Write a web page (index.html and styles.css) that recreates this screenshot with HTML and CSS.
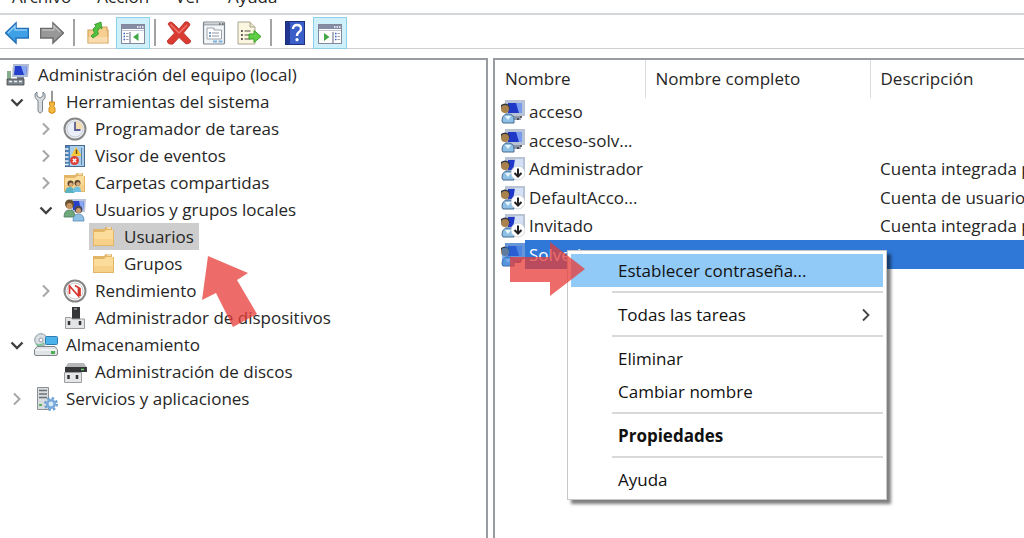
FILE: index.html
```html
<!DOCTYPE html>
<html lang="es">
<head>
  <meta charset="UTF-8">
  <meta name="viewport" content="width=device-width, initial-scale=1.0">
  <title>Administración de equipos</title>
  <link rel="stylesheet" href="styles.css">
</head>
<body>
  <!-- Shared icons -->
  <svg class="sprite" aria-hidden="true">
    <symbol id="chevron-right" viewBox="0 0 14 14">
      <path d="M4 1.5 L9.5 7 L4 12.5" fill="none" stroke="#a6a6a6" stroke-width="2"/>
    </symbol>
    <symbol id="chevron-down" viewBox="0 0 14 14">
      <path d="M1.5 4.5 L7 10 L12.5 4.5" fill="none" stroke="#404040" stroke-width="2.4"/>
    </symbol>
    <symbol id="folder" viewBox="0 0 24 24">
      <path d="M1 4 H12 L14 2 H20 V5 H22 V21 H1 Z" fill="#e3b566"/>
      <path d="M2 7 H12 L14 5 H21 V20 H2 Z" fill="#fbdc9b"/>
      <path d="M2 14 H21 V20 H2 Z" fill="#f7d08a"/>
      <path d="M15 3 H19" stroke="#fff" stroke-width="1"/>
    </symbol>
    <symbol id="user" viewBox="0 0 24 24">
      <path d="M4 0 H24 V16 H4 Z" fill="#b9c3d6"/>
      <path d="M7 3 H21 V13 H7 Z" fill="#1f38c8"/>
      <path d="M15 3 H21 V13 H18 Z" fill="#7a9cf0"/>
      <path d="M12 16 H19 L20 20 H12 Z" fill="#8c96a8"/>
      <path d="M16 19 h2 M19 17 h2" stroke="#333" stroke-width="1.5"/>
      <path d="M0 5 Q4 2 8 5 L9 9 L0 9 Z" fill="#2e3440"/>
      <circle cx="4" cy="9" r="4" fill="#a9814c"/>
      <path d="M1 21 Q1 14 7 14 Q13 14 13 20 V23 H2 Z" fill="#8fc1e6" stroke="#45698f" stroke-width="1"/>
      <path d="M4 16 L7 20 L10 16" fill="#e9f5ff"/>
    </symbol>
    <symbol id="user-off" viewBox="0 0 24 24">
      <use href="#user"/>
      <path d="M14 2 H22 V14 H12 Z" fill="#d3e0f5"/>
      <circle cx="17" cy="16" r="7" fill="#fff" stroke="#b9bfc9" stroke-width="0.6"/>
      <path d="M17 11.5 V19 M13.5 16 L17 19.5 L20.5 16" fill="none" stroke="#222" stroke-width="2"/>
    </symbol>
  </svg>

  <!-- Menu -->
  <nav class="menubar">
    <a href="#">Archivo</a>
    <a href="#">Acción</a>
    <a href="#">Ver</a>
    <a href="#">Ayuda</a>
  </nav>

  <!-- Toolbar -->
  <div class="toolbar">
    <button aria-label="Atrás">
      <svg viewBox="0 0 24 24"><path d="M0.500 12 L11 2 V7.500 H23.500 V17 H11 V22 Z" fill="#3fa0e6" stroke="#2470b8" stroke-width="1.500"/><path d="M3 12 L10 5 V9 H22" fill="none" stroke="#8ccbf5" stroke-width="1.500"/></svg>
    </button>
    <button aria-label="Adelante">
      <svg viewBox="0 0 24 24"><path d="M23.500 12 L13 2 V7.500 H0.500 V17 H13 V22 Z" fill="#989898" stroke="#6c6c6c" stroke-width="1.500"/><path d="M2 9 H14 V5 L20 11" fill="none" stroke="#bdbdbd" stroke-width="1.500"/></svg>
    </button>
    <span class="divider"></span>
    <button aria-label="Subir un nivel">
      <svg viewBox="0 0 24 24"><path d="M2 9 H12 L14 6 H21 V9 H22 V22 H2 Z" fill="#f6cf90" stroke="#d2a15a" stroke-width="1.200"/><path d="M2.500 16 H21.500 V21.500 H2.500 Z" fill="#f9dcae"/><path d="M5 15 L8.500 12 L7 8 L10 5 L8.500 3.500 L15 1 L16 8 L14 6.500 L11.500 10 L12.500 13 L7 17 Z" fill="#4fc23f" stroke="#31902a" stroke-width="0.800"/></svg>
    </button>
    <button class="active" aria-label="Mostrar u ocultar árbol">
      <svg viewBox="0 0 24 24"><rect x="0.500" y="3.500" width="23" height="19" fill="#fdfdfd" stroke="#83899b"/><path d="M1 4 H23 V8 H1 Z" fill="#858ca5"/><path d="M16 6 h1.500 M18.500 6 h1.500 M21 6 h1.500" stroke="#fff" stroke-width="1.500"/><path d="M1 9.500 H23" stroke="#c4c8d4"/><path d="M9 11 V22" stroke="#83899b" stroke-width="1.300"/><path d="M2.500 12.500 h1.500 M2.500 15.500 h1.500 M2.500 18.500 h1.500" stroke="#3d62bd" stroke-width="1.500"/><path d="M5 12.500 h2.500 M5 15.500 h2.500 M5 18.500 h2.500" stroke="#9aa0b4"/><path d="M17.500 12 V20 L12 16 Z" fill="#43a847"/></svg>
    </button>
    <span class="divider"></span>
    <button aria-label="Eliminar">
      <svg viewBox="0 0 24 24"><path d="M1 3 Q3 -1 7 3 L12 8 L18 1 Q22 0 23 4 L16.500 12 L24 20 Q23 23 19 23 L12 16.500 L6 23 Q1 24 0 20 L7.500 12 Z" fill="#d93a31" stroke="#b8322b" stroke-width="0.800"/><path d="M3.500 3.500 L12 12 L20 4" fill="none" stroke="#ee766d" stroke-width="1.500"/></svg>
    </button>
    <button aria-label="Propiedades">
      <svg viewBox="0 0 24 24"><rect x="1.500" y="1" width="21" height="22" rx="1" fill="#f3f5f7" stroke="#7e868f" stroke-width="1.200"/><path d="M2 3.500 H22" stroke="#a9afb7" stroke-width="2"/><path d="M17 3 h1.500 M20 3 h1.500" stroke="#555" stroke-width="1.500"/><path d="M5 7 H12 V9 H19.500 V18 H5 Z" fill="#fff" stroke="#9ba3ad"/><path d="M7 12 h2 M7 15 h2" stroke="#4e7fb5" stroke-width="1.500"/><path d="M10 12 h7 M10 15 h7" stroke="#8f98a3" stroke-width="1.200"/><path d="M11 20.500 h4 M16.500 20.500 h4" stroke="#78b1db" stroke-width="2"/></svg>
    </button>
    <button aria-label="Exportar lista">
      <svg viewBox="0 0 24 24"><path d="M1 1 H13 L18 6 V23 H1 Z" fill="#fbf6df" stroke="#aaa58f"/><path d="M13 1 V6 H18" fill="#e6e0c6" stroke="#aaa58f"/><path d="M4 10 h1.800 M4 14 h1.800 M4 18 h1.800" stroke="#555" stroke-width="1.800"/><path d="M7.500 10 h6 M7.500 14 h5 M7.500 18 h6" stroke="#8a8776" stroke-width="1.300"/><path d="M12 13 H17 V9.500 L24 15.500 L17 21.500 V18 H12 Z" fill="#5fd045" stroke="#38a229"/></svg>
    </button>
    <span class="divider"></span>
    <button aria-label="Ayuda">
      <svg viewBox="0 0 24 24"><rect x="2.500" y="0.500" width="19" height="23" fill="#3a5fc8" stroke="#1b2f7d"/><path d="M3 1 H7 V23 H3 Z" fill="#21378f"/><path d="M10 8 Q10 4 14 4 Q18 4 18 8 Q18 10 15.500 11.500 Q14 12.500 14 15" fill="none" stroke="#fff" stroke-width="2.400"/><circle cx="14" cy="18.700" r="1.600" fill="#fff"/></svg>
    </button>
    <button class="active" aria-label="Mostrar u ocultar panel de acciones">
      <svg viewBox="0 0 24 24"><rect x="0.500" y="3.500" width="23" height="19" fill="#fdfdfd" stroke="#83899b"/><path d="M1 4 H23 V8 H1 Z" fill="#858ca5"/><path d="M16 6 h1.500 M18.500 6 h1.500 M21 6 h1.500" stroke="#fff" stroke-width="1.500"/><path d="M1 9.500 H23" stroke="#c4c8d4"/><path d="M15 11 V22" stroke="#83899b" stroke-width="1.300"/><path d="M17 12.500 h1.500 M17 15.500 h1.500 M17 18.500 h1.500" stroke="#3d62bd" stroke-width="1.500"/><path d="M19.500 12.500 h2.500 M19.500 15.500 h2.500 M19.500 18.500 h2.500" stroke="#9aa0b4"/><path d="M6 12 V20 L11.500 16 Z" fill="#43a847"/></svg>
    </button>
  </div>

  <main class="panes">
    <!-- Console tree -->
    <section class="tree-pane">
      <ul class="tree">
        <li>
          <div class="row"><span class="item">
            <svg viewBox="0 0 24 24"><path d="M7 1 H23 L22 14 H6 Z" fill="#aebbd3"/><path d="M9 3 H21 L20 12 H8 Z" fill="#2440ca"/><path d="M15 3 H21 L20 12 H18 Z" fill="#88a6f1"/><path d="M11 14 H18 V17 H11 Z" fill="#7b8597"/><path d="M1 8 H5 V16 H1 Z" fill="#86ad8d"/><path d="M1 16 H18 V22 H1 Z" fill="#7d858f" stroke="#444" stroke-width="0.800"/><path d="M3 18.500 h3 M8 18.500 h3 M13 18.500 h3" stroke="#f0f0f0" stroke-width="1.500"/></svg>
            Administración del equipo (local)</span></div>
          <ul>
            <li>
              <div class="row"><svg class="chevron"><use href="#chevron-down"/></svg><span class="item">
                <svg viewBox="0 0 24 24"><path d="M3 2 L3 6 L6 8 L9 6 V2 Q12 4 11 8 L8.500 11 V21 Q6 25 4 21 V11 Q0 8 1 4 Z" fill="#d5dade" stroke="#7b848c"/><path d="M17.500 1 L18.500 1 V12 H17.500 Z" fill="#999" stroke="#999"/><path d="M15.500 12 H20.500 V15 L19.500 16 L21 18 V22 Q18 25 15 22 V18 L16.500 16 L15.500 15 Z" fill="#f5b93f" stroke="#cb8a1d"/></svg>
                Herramientas del sistema</span></div>
              <ul>
                <li><div class="row"><svg class="chevron"><use href="#chevron-right"/></svg><span class="item">
                  <svg viewBox="0 0 24 24"><circle cx="12" cy="12" r="10.500" fill="#edf1f7" stroke="#878787" stroke-width="2"/><circle cx="12" cy="12" r="8" fill="#e9eef8" stroke="#c9ccd2"/><path d="M12 12 V4 A8 8 0 0 1 20 12 Z" fill="#f4dcae"/><path d="M12 5 V13 H17.500" fill="none" stroke="#5a5d93" stroke-width="1.800"/></svg>
                  Programador de tareas</span></div></li>
                <li><div class="row"><svg class="chevron"><use href="#chevron-right"/></svg><span class="item">
                  <svg viewBox="0 0 24 24"><rect x="2.500" y="1.500" width="19" height="21" fill="#a9cdea" stroke="#4a6a8f"/><path d="M3 2 H7 V22 H3 Z" fill="#4f84bb"/><path d="M1.500 5 h4 M1.500 9 h4 M1.500 13 h4 M1.500 17 h4 M1.500 20.500 h4" stroke="#eef3f8" stroke-width="1.300"/><path d="M13 3 L19 12 H8 Z" fill="#f4c93d"/><path d="M18.500 4 V21" stroke="#5b84ac"/><path d="M13.500 5.500 V10" stroke="#714c0a" stroke-width="1.500"/><circle cx="11.500" cy="16.500" r="4.500" fill="#dc3e38"/><path d="M9.800 14.800 L13.200 18.200 M13.200 14.800 L9.800 18.200" stroke="#fff" stroke-width="1.300"/></svg>
                  Visor de eventos</span></div></li>
                <li><div class="row"><svg class="chevron"><use href="#chevron-right"/></svg><span class="item">
                  <svg viewBox="0 0 24 24"><use href="#folder"/><circle cx="7.500" cy="12.500" r="3" fill="#5a4630"/><circle cx="14.500" cy="12" r="3" fill="#5a4630"/><circle cx="8" cy="13.500" r="2" fill="#d9aa77"/><circle cx="15" cy="13" r="2" fill="#d9aa77"/><path d="M2 22 Q2 16 7 16 Q11 16 11.500 22 Z" fill="#59b3c4"/><path d="M10 21 Q10 15.500 14.500 15.500 Q18 15.500 18 21 Z" fill="#6fbfe0"/></svg>
                  Carpetas compartidas</span></div></li>
                <li>
                  <div class="row"><svg class="chevron"><use href="#chevron-down"/></svg><span class="item">
                    <svg viewBox="0 0 24 24"><path d="M8 1 H23 L22 14 H8 Z" fill="#b9c4da"/><path d="M10 3 H21 L20 12 H10 Z" fill="#2440ca"/><path d="M16 3 H21 L20 12 H18 Z" fill="#88a6f1"/><circle cx="6.500" cy="6" r="4.500" fill="#675134"/><circle cx="6.500" cy="8" r="3" fill="#c7935c"/><path d="M1 19 Q1 12 6.500 12 Q12 12 12 19 Z" fill="#6ea87b" stroke="#47765a" stroke-width="0.800"/><circle cx="15.500" cy="11.500" r="3.800" fill="#4a4455"/><circle cx="15.500" cy="12.500" r="2.500" fill="#cf9d6e"/><path d="M10 23 Q10 16 15.500 16 Q21 16 21 23 Z" fill="#8fc1e6" stroke="#5588b4" stroke-width="0.800"/></svg>
                    Usuarios y grupos locales</span></div>
                  <ul>
                    <li><div class="row"><span class="chevron"></span><span class="item selected"><svg><use href="#folder"/></svg>Usuarios</span></div></li>
                    <li><div class="row"><span class="chevron"></span><span class="item"><svg><use href="#folder"/></svg>Grupos</span></div></li>
                  </ul>
                </li>
                <li><div class="row"><svg class="chevron"><use href="#chevron-right"/></svg><span class="item">
                  <svg viewBox="0 0 24 24"><circle cx="12" cy="12" r="10.500" fill="#fff" stroke="#858585" stroke-width="2"/><circle cx="12" cy="12" r="8" fill="none" stroke="#c9c9c9"/><path d="M6.500 15 V7 L15.500 17 V8 M12 6.500 L17 9.500 V17" fill="none" stroke="#d93630" stroke-width="1.700"/></svg>
                  Rendimiento</span></div></li>
                <li><div class="row"><span class="chevron"></span><span class="item">
                  <svg viewBox="0 0 24 24"><path d="M9 1 H17 V13 H9 Z" fill="#353638"/><path d="M11 3 h3" stroke="#999" stroke-width="1.500"/><path d="M2.500 11.500 H8 L9 13 H21.500 V22.500 H2.500 Z" fill="#e3e4e6" stroke="#9a9c9f"/><path d="M6 15 V19 M17 15 V19" stroke="#333" stroke-width="2.500"/></svg>
                  Administrador de dispositivos</span></div></li>
              </ul>
            </li>
            <li>
              <div class="row"><svg class="chevron"><use href="#chevron-down"/></svg><span class="item">
                <svg viewBox="0 0 24 24"><circle cx="7" cy="7" r="6.300" fill="#d7dfe2" stroke="#8f9aa0"/><circle cx="7" cy="7" r="2" fill="#fff" stroke="#99a"/><path d="M2 11 Q6 14 10 10" stroke="#7fc39a" stroke-width="2" fill="none"/><rect x="11.500" y="3.500" width="12" height="8" rx="1" fill="#4cb2ea" stroke="#2c7cb2"/><path d="M3 13.500 H21 L23.500 17 V21 Q23.500 22.500 22 22.500 H2 Q0.500 22.500 0.500 21 V17 Z" fill="#dfe3e6" stroke="#7e868c"/><path d="M1 17 H23" stroke="#fff"/><rect x="17" y="18" width="4" height="3" fill="#4caf50"/></svg>
                Almacenamiento</span></div>
              <ul>
                <li><div class="row"><span class="chevron"></span><span class="item">
                  <svg viewBox="0 0 24 24"><path d="M5 3 H21 L24 8 H2 Z" fill="#b5b7b9"/><path d="M2 7 H24 V12 H2 Z" fill="#343638"/><path d="M18 9.500 h3" stroke="#68d06a" stroke-width="1.500"/><path d="M1.500 12.500 H18.500 V22.500 H1.500 Z" fill="#e5e6e8" stroke="#9a9c9f"/><path d="M5.500 15 V19 M14 15 V19" stroke="#333" stroke-width="2.500"/></svg>
                  Administración de discos</span></div></li>
              </ul>
            </li>
            <li><div class="row"><svg class="chevron"><use href="#chevron-right"/></svg><span class="item">
              <svg viewBox="0 0 24 24"><path d="M3.500 0.500 H14.500 V22.500 H3.500 Z" fill="#d9dde0" stroke="#8a9197"/><path d="M5 3.500 H13 M5 7 H13 M5 10.500 H13" stroke="#6a7177" stroke-width="1.500"/><path d="M5 18 h3" stroke="#58b158" stroke-width="2"/><circle cx="17" cy="17" r="5.800" fill="none" stroke="#6c9fd2" stroke-width="2.400" stroke-dasharray="2.400 2.150"/><circle cx="17" cy="17" r="3.700" fill="#d9eafa" stroke="#78a9da" stroke-width="2.600"/></svg>
              Servicios y aplicaciones</span></div></li>
          </ul>
        </li>
      </ul>
      <!-- Pointer to the Usuarios folder -->
      <svg class="arrow arrow-tree" viewBox="0 0 56 72"><path d="M6 0 L46 17 L35 24 L55 58 L31 71 L14 37 L0 44 Z"/></svg>
    </section>

    <!-- User list -->
    <section class="list-pane">
      <table class="users">
        <thead>
          <tr><th class="col-name">Nombre</th><th class="col-full">Nombre completo</th><th>Descripción</th></tr>
        </thead>
        <tbody>
          <tr><td><div class="user"><svg><use href="#user"/></svg><span>acceso</span></div></td><td></td><td></td></tr>
          <tr><td><div class="user"><svg><use href="#user"/></svg><span>acceso-solv...</span></div></td><td></td><td></td></tr>
          <tr><td><div class="user"><svg><use href="#user-off"/></svg><span>Administrador</span></div></td><td></td><td>Cuenta integrada p</td></tr>
          <tr><td><div class="user"><svg><use href="#user-off"/></svg><span>DefaultAcco...</span></div></td><td></td><td>Cuenta de usuario</td></tr>
          <tr><td><div class="user"><svg><use href="#user-off"/></svg><span>Invitado</span></div></td><td></td><td>Cuenta integrada p</td></tr>
          <tr class="selected"><td><div class="user"><svg viewBox="0 0 24 24"><use href="#user"/><path d="M4 0 H24 V16 H20 V20 H13 V23 H1 V5 H4 Z" fill="#2f78d7" opacity="0.6"/></svg><span>Solvetic</span></div></td><td></td><td></td></tr>
        </tbody>
      </table>

      <!-- Context menu -->
      <div class="context-menu">
        <button class="hover">Establecer contraseña...</button>
        <hr>
        <button>Todas las tareas <svg viewBox="0 0 14 14"><path d="M4 1.500 L9.500 7 L4 12.500" fill="none" stroke="#444" stroke-width="1.800"/></svg></button>
        <hr>
        <button>Eliminar</button>
        <button>Cambiar nombre</button>
        <hr>
        <button class="default">Propiedades</button>
        <hr>
        <button>Ayuda</button>
      </div>
      <!-- Pointer to the password option -->
      <svg class="arrow arrow-menu" viewBox="0 0 76 54"><path d="M0 15 H40 V0 L75 27 L40 54 V40 H0 Z"/></svg>
    </section>
  </main>
</body>
</html>
```

FILE: styles.css
```css
* {
  box-sizing: border-box;
}
body {
  margin: 0;
  height: 100vh;
  display: flex;
  flex-direction: column;
  overflow: hidden;
  background: #fff;
  color: #262626;
  font-family: "Open Sans", "Noto Sans", sans-serif;
  font-size: 17px;
  line-height: 24px;
}
button {
  font: inherit;
  color: inherit;
  border: 0;
  background: none;
}
ul {
  list-style: none;
  margin: 0;
  padding: 0;
}
.sprite {
  position: absolute;
  width: 0;
  height: 0;
}

/* Menu and toolbar */
.menubar {
  display: flex;
  align-items: flex-end;
  gap: 26px;
  height: 13px;
  padding: 0 12px 4px;
  overflow: hidden;
}
.menubar a {
  color: inherit;
  text-decoration: none;
}
.toolbar {
  display: flex;
  align-items: center;
  gap: 1px;
  height: 36px;
  padding-top: 2px;
  border-top: 2px solid #d4d7da;
  border-bottom: 1px solid #cfcfcf;
}
.toolbar button {
  display: flex;
  align-items: center;
  justify-content: center;
  width: 34px;
  height: 32px;
  padding: 0;
}
.toolbar button.active {
  background: #cdf0fa;
  border: 1px solid #8fd0e8;
}
.toolbar svg {
  width: 24px;
  height: 24px;
}
.divider {
  width: 2px;
  height: 27px;
  margin: 0 5px 0 3px;
  background: #a3a3a3;
}

/* Panes */
.panes {
  flex: 1;
  display: flex;
  gap: 5px;
  margin-top: 9px;
  min-height: 0;
}
.tree-pane,
.list-pane {
  position: relative;
  border: 2px solid #989b9f;
  border-bottom: 0;
}
.tree-pane {
  flex: 0 0 488px;
  border-left: 0;
  padding: 1px 3px;
}
.list-pane {
  flex: 1;
  min-width: 0;
  border-right: 0;
  overflow: hidden;
}

/* Tree */
.tree ul ul {
  padding-left: 29px;
}
.row {
  display: flex;
  align-items: center;
  height: 27px;
}
.chevron {
  flex: none;
  width: 28px;
  height: 14px;
}
.item {
  display: flex;
  align-items: center;
  gap: 8px;
  height: 27px;
  padding: 0 5px 0 3px;
  white-space: nowrap;
}
.item svg {
  width: 24px;
  height: 24px;
}
.item.selected {
  background: #cdcdcd;
}

/* User table */
.users {
  width: 100%;
  table-layout: fixed;
  border-collapse: collapse;
}
.users th,
.users td {
  padding: 0 0 0 10px;
  text-align: left;
  font-weight: normal;
  white-space: nowrap;
  overflow: hidden;
}
.users th {
  height: 38px;
}
.users th + th {
  border-left: 1px solid #dcdcdc;
}
.users td {
  height: 28px;
}
.users tr:nth-child(even) td {
  height: 29px;
}
.users td:first-child {
  padding-left: 6px;
}
.col-name {
  width: 150px;
}
.col-full {
  width: 225px;
}
.user {
  display: flex;
  align-items: center;
}
.user svg {
  flex: none;
  width: 24px;
  height: 24px;
}
.user span {
  flex: 1;
  padding-left: 4px;
  line-height: 28px;
}
.users .selected span {
  line-height: 29px;
}
.users .selected span,
.users .selected td + td {
  background: #2f78d7;
  color: #fff;
}

/* Context menu */
.context-menu {
  position: absolute;
  left: 72px;
  top: 190px;
  width: 320px;
  padding: 3px;
  background: #fff;
  border: 1px solid #c8c8c8;
  box-shadow: 4px 4px 3px rgba(0, 0, 0, 0.5);
}
.context-menu button {
  display: flex;
  align-items: center;
  justify-content: space-between;
  width: 100%;
  height: 33px;
  padding: 0 10px 0 47px;
  color: #111;
}
.context-menu button.hover {
  background: #91c9f7;
}
.context-menu button.default {
  font-weight: bold;
}
.context-menu svg {
  width: 14px;
  height: 14px;
}
.context-menu hr {
  height: 2px;
  margin: 4px 0 5px 41px;
  border: 0;
  background: #d9d9d9;
}

/* Red pointers */
.arrow {
  position: absolute;
  fill: #e83c37;
  opacity: 0.75;
}
.arrow-tree {
  left: 202px;
  top: 196px;
  width: 56px;
  height: 72px;
}
.arrow-menu {
  left: 15px;
  top: 182px;
  width: 76px;
  height: 54px;
}
```
